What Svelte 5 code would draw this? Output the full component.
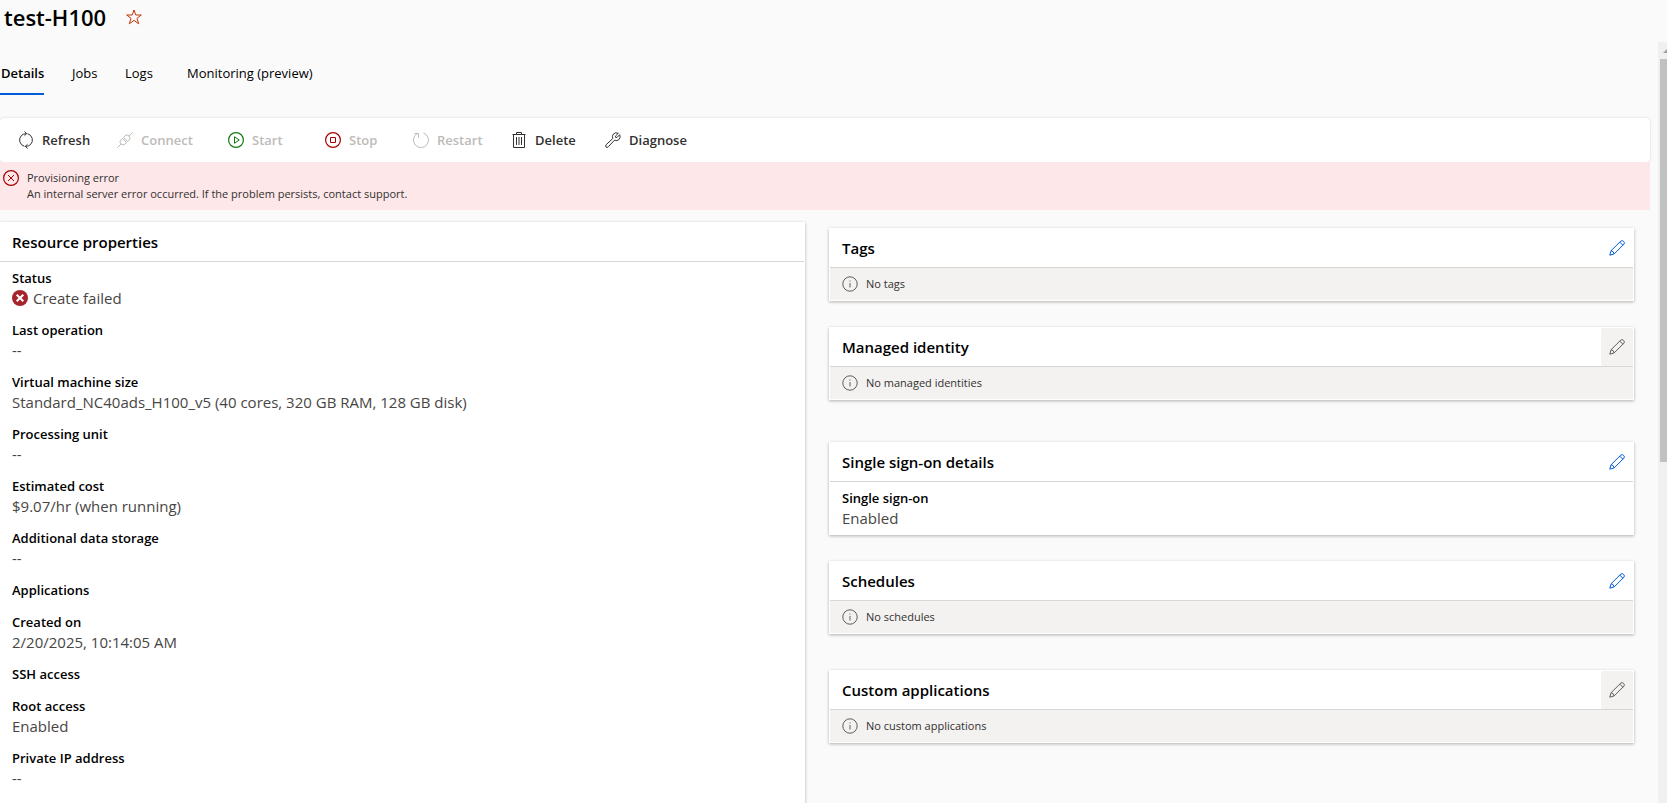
<script lang="ts">
  type Property = { label: string; value?: string; failed?: boolean };
  type Card = { title: string; empty?: string; items?: Property[]; locked?: boolean; group?: string };

  const tabs = ['Details', 'Jobs', 'Logs', 'Monitoring (preview)'];
  let activeTab = $state('Details');

  const commands = [
    { name: 'Refresh', icon: 'refresh' },
    { name: 'Connect', icon: 'connect', disabled: true },
    { name: 'Start', icon: 'start', disabled: true },
    { name: 'Stop', icon: 'stop', disabled: true },
    { name: 'Restart', icon: 'restart', disabled: true },
    { name: 'Delete', icon: 'delete' },
    { name: 'Diagnose', icon: 'diagnose' },
  ];

  const properties: Property[] = [
    { label: 'Status', value: 'Create failed', failed: true },
    { label: 'Last operation', value: '--' },
    { label: 'Virtual machine size', value: 'Standard_NC40ads_H100_v5 (40 cores, 320 GB RAM, 128 GB disk)' },
    { label: 'Processing unit', value: '--' },
    { label: 'Estimated cost', value: '$9.07/hr (when running)' },
    { label: 'Additional data storage', value: '--' },
    { label: 'Applications' },
    { label: 'Created on', value: '2/20/2025, 10:14:05 AM' },
    { label: 'SSH access' },
    { label: 'Root access', value: 'Enabled' },
    { label: 'Private IP address', value: '--' },
  ];

  const cards: Card[] = [
    { title: 'Tags', empty: 'No tags' },
    { title: 'Managed identity', empty: 'No managed identities', locked: true, group: 'identity' },
    { title: 'Single sign-on details', items: [{ label: 'Single sign-on', value: 'Enabled' }] },
    { title: 'Schedules', empty: 'No schedules', group: 'schedules' },
    { title: 'Custom applications', empty: 'No custom applications', locked: true },
  ];
</script>

{#snippet icon(name: string)}
  <svg class="icon {name}" width="16" height="16" viewBox="0 0 16 16" fill="none" stroke="currentColor" aria-hidden="true">
    {#if name === 'refresh'}
      <path d="M6.5 14.3A6.5 6.5 0 0 1 3.6 3.3Q5 1.9 8.5 1.6M9.5 1.7A6.5 6.5 0 0 1 12.4 12.7Q11 14.1 7.5 14.4" />
      <path d="M6.5 -.5 8.7 1.6 6.5 3.7M9.5 12.3 7.3 14.4 9.5 16.5" />
    {:else if name === 'connect'}
      <path d="M.5 15.5 4 12M12 4 15.5 .5M4 12Q1.8 9.8 4 7.8L5.3 6.5 9.5 10.7 8.2 12Q6 14 4 12ZM6.5 5.3 8 3.8Q10 1.8 12 4T12.2 8L10.7 9.5ZM6.3 7.5 7.7 6.1M8.5 9.7 9.9 8.3" />
    {:else if name === 'start'}
      <circle cx="8" cy="8" r="7.4" stroke-width="1.2" />
      <path d="M6.5 4.7V11.3L11.2 8Z" />
    {:else if name === 'stop'}
      <circle cx="8" cy="8" r="7.4" stroke-width="1.2" />
      <path d="M5.5 5.5H10.5V10.5H5.5Z" />
    {:else if name === 'restart'}
      <path d="M10.5 1A7.5 7.5 0 1 1 4.5 1.4M1.5 1.5H5.5V5.5" />
    {:else if name === 'delete'}
      <path d="M1.5 2.5H14.5M5.5 2.5V.5H10.5V2.5M2.5 2.5V15.5H13.5V2.5M5.5 5V13M8 5V13M10.5 5V13" />
    {:else if name === 'diagnose'}
      <path d="M13.3 1.3Q10.5 -.2 8.3 2.2 6.8 4.2 7.8 6.5L1.2 12.7Q0 14 1 15T3.3 14.8L9.5 8.2Q12 9.2 13.9 7.6 16 5.5 14.7 2.7L12 5.5 10.5 5.3 10.4 4.1Z" />
    {:else if name === 'edit'}
      <path d="M.8 15.2 2.1 10.7 11.8 1.1Q13.2 0 14.6 1.4T14.9 4.2L5.2 13.9ZM2.1 10.7Q4.5 11 5.2 13.9M10.8 2.1 13.9 5.2" />
    {:else if name === 'info'}
      <circle cx="8" cy="8" r="7.2" />
      <path d="M8 7V11.5M8 4.5V5.5" />
    {:else if name === 'error'}
      <circle cx="8" cy="8" r="7.4" stroke-width="1.2" />
      <path d="M5 5 11 11M11 5 5 11" />
    {:else if name === 'failed'}
      <circle cx="8" cy="8" r="8" fill="#a4262c" stroke="none" />
      <path d="M4.7 4.7 11.3 11.3M11.3 4.7 4.7 11.3" stroke="#fff" stroke-width="2" />
    {:else if name === 'star'}
      <path d="M8 1 9.8 6H15.3L11 9.3 12.7 14.8 8 11.4 3.3 14.8 5 9.3 .7 6H6.2Z" />
    {/if}
  </svg>
{/snippet}

{#snippet propertyList(items: Property[])}
  <dl>
    {#each items as item}
      <div class="property">
        <dt>{item.label}</dt>
        {#if item.value}
          <dd>
            {#if item.failed}{@render icon('failed')}{/if}
            {item.value}
          </dd>
        {/if}
      </div>
    {/each}
  </dl>
{/snippet}

<div class="page">
  <header>
    <h1>test-H100</h1>
    <button class="favorite" aria-label="Add to favorites">{@render icon('star')}</button>
  </header>

  <div class="body">
    <main>
      <div class="tabs" role="tablist">
        {#each tabs as tab}
          <button role="tab" aria-selected={tab === activeTab} class:active={tab === activeTab} onclick={() => (activeTab = tab)}>{tab}</button>
        {/each}
      </div>

      <div class="commands" role="toolbar" aria-label="Compute actions">
        {#each commands as cmd}
          <button disabled={cmd.disabled}>{@render icon(cmd.icon)}{cmd.name}</button>
        {/each}
      </div>

      <div class="message" role="alert">
        {@render icon('error')}
        <div>
          <p>Provisioning error</p>
          <p>An internal server error occurred. If the problem persists, contact support.</p>
        </div>
      </div>

      <div class="columns">
        <section class="card resource">
          <div class="card-head"><h2>Resource properties</h2></div>
          {@render propertyList(properties)}
        </section>

        <div class="side">
          {#each cards as card}
            <section class="card {card.group ?? ''}">
              <div class="card-head">
                <h2>{card.title}</h2>
                <button disabled={card.locked} aria-label="Edit {card.title}">{@render icon('edit')}</button>
              </div>
              {#if card.items}
                {@render propertyList(card.items)}
              {:else}
                <p class="empty">{@render icon('info')}{card.empty}</p>
              {/if}
            </section>
          {/each}
        </div>
      </div>
    </main>

    <div class="scrollbar" aria-hidden="true">
      <svg width="9" height="17" viewBox="0 0 9 17"><path d="M5 11 9 7V11Z" fill="#a0a0a0" /></svg>
      <div class="thumb"></div>
    </div>
  </div>
</div>

<style>
  :global(body) {
    margin: 0;
    background: #fafafa;
  }

  .page {
    display: flex;
    flex-direction: column;
    height: 100vh;
    overflow: hidden;
    font-family: "Open Sans", "Noto Sans", sans-serif;
    font-size: 13px;
    line-height: 20px;
    color: #323130;
  }

  h1, h2, p, dl, dt, dd { margin: 0; }

  button {
    display: flex;
    align-items: center;
    padding: 0;
    border: 0;
    background: none;
    font: inherit;
    color: inherit;
    white-space: nowrap;
  }

  .icon { flex-shrink: 0; overflow: visible; }

  header {
    display: flex;
    align-items: center;
    gap: 20px;
    height: 34px;
    padding: 0 4px 8px;
  }
  h1 {
    font-size: 22px;
    line-height: 34px;
    font-weight: 600;
    color: #000;
  }
  .favorite { color: #c4320a; }

  .body {
    display: flex;
    flex: 1;
    min-height: 0;
  }
  main {
    flex: 1;
    min-width: 0;
    padding-right: 8px;
    overflow: hidden;
  }

  .tabs {
    display: grid;
    grid-template-columns: 71px 53px 62px auto;
    justify-content: start;
    justify-items: start;
    padding-top: 11px;
    margin-bottom: 23px;
    color: #000;
  }
  .tabs button {
    height: 42px;
    padding-left: 1px;
    border-bottom: 2px solid transparent;
  }
  .tabs .active {
    border-color: #015cda;
    font-weight: 600;
  }

  .commands {
    display: grid;
    grid-template-columns: 99px 111px 97px 88px 98px 94px auto;
    justify-content: start;
    height: 44px;
    padding-left: 18px;
    border-radius: 4px;
    background: #fff;
    box-shadow: 0 0 2px rgba(0, 0, 0, 0.2);
    font-weight: 600;
  }
  .commands button { gap: 8px; }
  .commands button:disabled { color: #bdbbb9; }
  .commands .start { color: #107c10; }
  .commands .stop { color: #a80000; }

  /* relative so the toolbar shadow stays underneath */
  .message {
    position: relative;
    display: flex;
    gap: 8px;
    padding: 8px 3px;
    background: #fde7e9;
    font-size: 11px;
    line-height: 16px;
  }
  .message .error { color: #a80000; }

  .columns {
    display: grid;
    grid-template-columns: 1fr 1fr;
    gap: 24px;
    padding: 12px 16px 0 0;
  }

  .card {
    border: 1px solid #fff;
    background: #fff;
    box-shadow: 0 1px 3px rgba(0, 0, 0, 0.3);
  }
  .resource { border-left: 0; }
  .card-head {
    display: flex;
    justify-content: space-between;
    height: 38px;
    border-bottom: 1px solid #d6d6d6;
  }
  h2 {
    padding-left: 12px;
    font-size: 15px;
    line-height: 38px;
    font-weight: 600;
    color: #000;
  }
  .card-head button {
    justify-content: center;
    width: 32px;
    color: #015cda;
  }
  .card-head button:disabled {
    border-radius: 2px;
    background: #f3f2f1;
    color: #605e5c;
  }

  .side {
    display: flex;
    flex-direction: column;
    gap: 26px;
    padding-top: 6px;
  }
  .identity { margin-bottom: 16px; }
  .schedules { margin-bottom: 10px; }

  dl { padding: 6px 12px; }
  .resource dl { padding-bottom: 48px; }
  .property + .property { padding-top: 12px; }
  dt {
    font-weight: 600;
    color: #000;
  }
  dd {
    display: flex;
    align-items: center;
    gap: 5px;
    font-size: 15px;
    color: #484644;
  }

  .empty {
    display: flex;
    align-items: center;
    gap: 8px;
    height: 32px;
    padding-left: 12px;
    background: #f3f2f1;
    font-size: 11px;
  }
  .info { color: #605e5c; }

  .scrollbar {
    display: flex;
    flex-direction: column;
    width: 9px;
    background: #f0f0f0;
  }
  .thumb {
    height: 53%;
    margin-left: 2px;
    background: #c1c1c1;
  }
</style>
